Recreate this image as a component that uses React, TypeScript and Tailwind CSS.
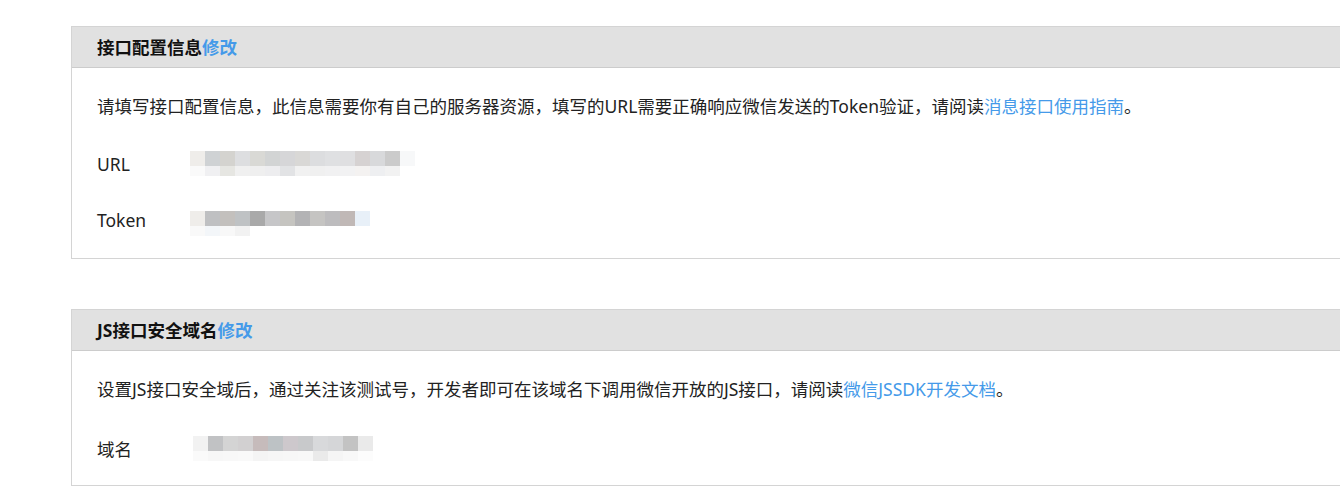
import React from "react";

type Mosaic = { top: string[]; bottom: string[] };

const urlMosaic: Mosaic = {
  top: ["#efedea", "#cfd2d4", "#d4d3cf", "#dddee0", "#d9d9d5", "#d2d4d4", "#d6d6d8", "#d9d8d6", "#dcdddf", "#dfe0e2", "#dfdfe1", "#d6d2d2", "#d8d9db", "#cbcbcb", "#f7f8f9"],
  bottom: ["#fafafa", "#f0f0f2", "#e6e6e2", "#f0f0f0", "#efefef", "#ededef", "#e2e3e5", "#f1f1f1", "#f0f0f0", "#f1f1f2", "#f2f2f3", "#f4f2f1", "#eeeff1", "#f2f2f2", "#ffffff"],
};
const tokenMosaic: Mosaic = {
  top: ["#efedea", "#bfc0c2", "#c3c0bd", "#bfc2c4", "#a9a9a9", "#c6c6c8", "#c5c4c0", "#b3b3b5", "#c5c4c2", "#bdbcbe", "#c0b8b6", "#e8f0f8"],
  bottom: ["#f9f9f9", "#f3f6f9", "#f8f8f8", "#f2f2f2"],
};
const domainMosaic: Mosaic = {
  top: ["#f2f2f2", "#c1c2c4", "#d4d4d4", "#d2d0d1", "#c6bbbb", "#bdc2c5", "#cdc8cc", "#c8c9cb", "#d8d9db", "#d5d6d8", "#c3c3c3", "#eaeaea"],
  bottom: ["#fafafa", "#f7f7f7", "#f8f8f8", "#f9f9f9", "#f4f4f4", "#f6f6f6", "#f7f7f7", "#f8f8f8", "#eaeaea", "#f5f5f5", "#f8f8f8", "#fcfcfc"],
};

function Blur({ m }: { m: Mosaic }) {
  return (
    <div className="flex flex-col">
      <div className="flex">
        {m.top.map((c, i) => (
          <div key={i} className="h-[15px] w-[15px]" style={{ backgroundColor: c }} />
        ))}
      </div>
      <div className="flex">
        {m.bottom.map((c, i) => (
          <div key={i} className="h-[10px] w-[15px]" style={{ backgroundColor: c }} />
        ))}
      </div>
    </div>
  );
}

function Row({ label, m, valueClass }: { label: string; m: Mosaic; valueClass: string }) {
  return (
    <div className="flex items-start">
      <div className="w-[93px] text-[17.5px] leading-[24px] text-[#222]">{label}</div>
      <div className={valueClass}>
        <Blur m={m} />
      </div>
    </div>
  );
}

export default function App() {
  return (
    <div
      className="min-h-[493px] w-[1340px] overflow-hidden bg-white pl-[71px] pt-[26px]"
      style={{ fontFamily: '"Noto Sans", "Noto Sans CJK SC", sans-serif' }}
    >
      <section className="border-y border-l border-[#d4d4d4]">
        <div className="flex h-[41px] items-center border-b border-[#cccccc] bg-[#e1e1e1] pl-[25px] text-[17.5px] font-bold text-[#111]">
          接口配置信息<span className="text-[#459ae9]">修改</span>
        </div>
        <div className="px-[25px] pb-[22px] pt-[26px]">
          <p className="text-[17.5px] leading-[24px] text-[#222]">
            请填写接口配置信息，此信息需要你有自己的服务器资源，填写的URL需要正确响应微信发送的Token验证，请阅读
            <span className="text-[#459ae9]">消息接口使用指南</span>。
          </p>
          <div className="mt-[34px] flex flex-col gap-[32px]">
            <Row label="URL" m={urlMosaic} valueClass="-mt-[1px]" />
            <Row label="Token" m={tokenMosaic} valueClass="mt-[3px]" />
          </div>
        </div>
      </section>

      <section className="mt-[50px] border-y border-l border-[#d4d4d4]">
        <div className="flex h-[41px] items-center border-b border-[#cccccc] bg-[#e1e1e1] pl-[25px] text-[17.5px] font-bold text-[#111]">
          JS接口安全域名<span className="text-[#459ae9]">修改</span>
        </div>
        <div className="px-[25px] pb-[24px] pt-[26px]">
          <p className="text-[17.5px] leading-[24px] text-[#222]">
            设置JS接口安全域后，通过关注该测试号，开发者即可在该域名下调用微信开放的JS接口，请阅读
            <span className="text-[#459ae9]">微信JSSDK开发文档</span>。
          </p>
          <div className="mt-[36px]">
            <Row label="域名" m={domainMosaic} valueClass="ml-[3px] -mt-[1px]" />
          </div>
        </div>
      </section>
    </div>
  );
}
